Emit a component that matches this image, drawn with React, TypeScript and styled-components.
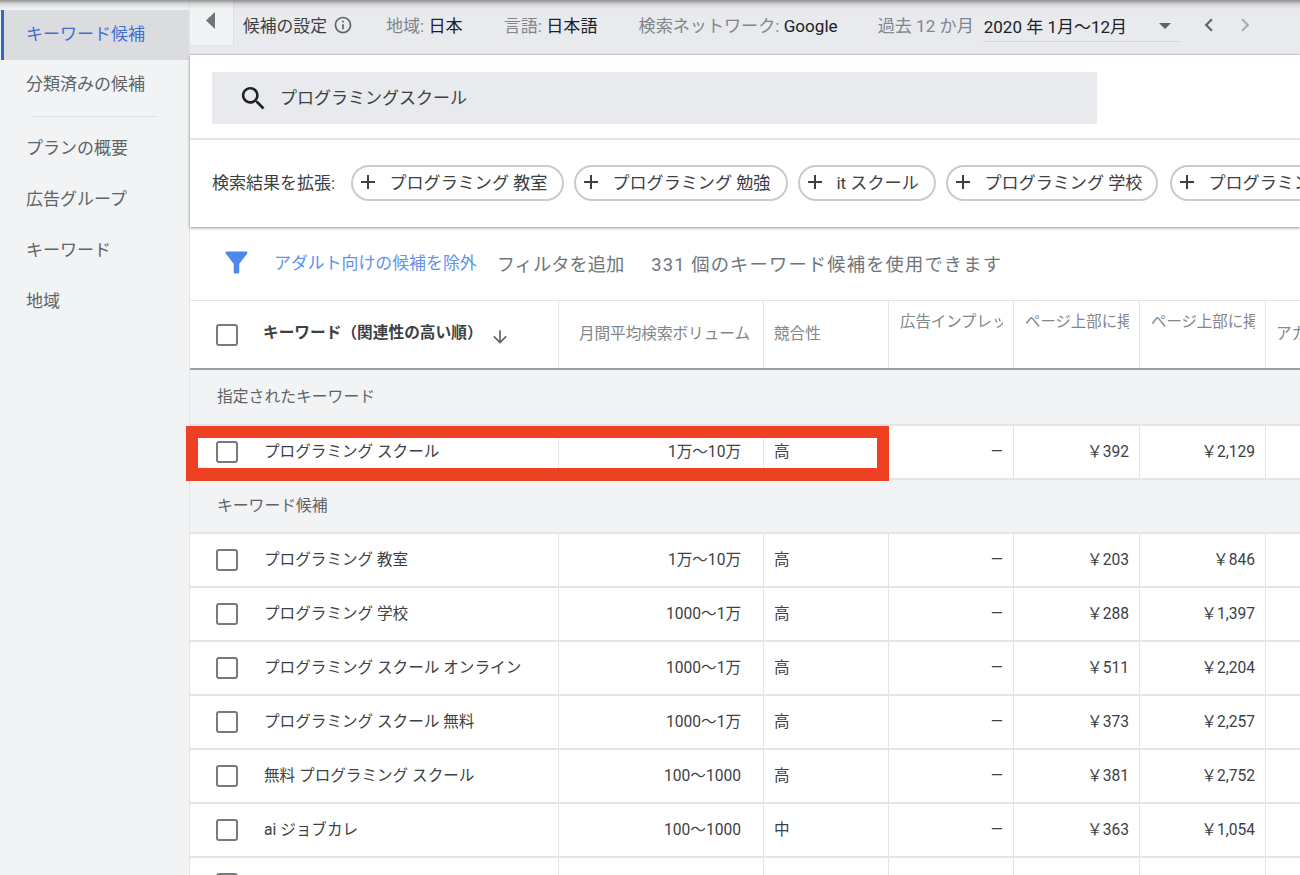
import React from "react";
import styled, { createGlobalStyle } from "styled-components";

const Global = createGlobalStyle`
  html, body { margin: 0; padding: 0; background: #fff; }
  body { font-family: Roboto, "Noto Sans CJK JP", "Noto Sans", sans-serif; color: #3c4043; }
  * { box-sizing: border-box; }
`;

const Page = styled.div`
  position: relative; width: 1300px; height: 875px; overflow: hidden; display: flex;
`;
const TopShade = styled.div`
  position: absolute; left: 0; right: 0; top: 0; height: 9px; z-index: 5; pointer-events: none;
  background: linear-gradient(to bottom, rgba(90,90,90,.62), rgba(120,120,120,.22) 45%, rgba(120,120,120,0));
`;
const Sidebar = styled.nav`
  flex: 0 0 190px; background: #f1f3f4; padding-top: 10px; border-right: 1px solid #e3e5e8;
`;
const NavItem = styled.div<{ $active?: boolean }>`
  height: ${(p) => (p.$active ? 50 : 51)}px; display: flex; align-items: center;
  padding-left: ${(p) => (p.$active ? 22 : 26)}px; font-size: 17px; white-space: nowrap;
  padding-bottom: ${(p) => (p.$active ? 6 : 6)}px;
  color: ${(p) => (p.$active ? "#3f6fd0" : "#5f6368")};
  background: ${(p) => (p.$active ? "#dadce0" : "transparent")};
  margin-left: ${(p) => (p.$active ? 1 : 0)}px;
  border-left: ${(p) => (p.$active ? "3px solid #2f66c8" : "0")};
`;
const NavRule = styled.div`
  width: 126px; height: 1px; background: #dadce0; margin: 5px 0 3px 31px;
`;
const NavGroup = styled.div`
  padding-top: 4px;
  & > div { height: 51px; }
`;
const Main = styled.main`
  flex: 1; min-width: 0; display: flex; flex-direction: column;
`;
const TopBar = styled.header`
  flex: 0 0 55px; display: flex; align-items: center; background: #e8eaed; padding-bottom: 5px;
  border-bottom: 1px solid #d2d4d8; white-space: nowrap; font-size: 17px;
`;
const CollapseTab = styled.div`
  flex: 0 0 44px; height: 46px; align-self: flex-start; background: #f1f3f4;
  border-right: 1px solid #dfe1e5; border-bottom: 1px solid #dfe1e5;
  display: flex; justify-content: center; padding: 12px 3px 0 0;
`;
const BarTitle = styled.span`
  margin-left: 9px; font-size: 16.8px; color: #3c4043;
`;
const InfoWrap = styled.span`
  display: inline-flex; margin-left: 6px; color: #5f6368;
`;
const Setting = styled.span<{ $gap: number }>`
  margin-left: ${(p) => p.$gap}px; color: #80868b; font-size: 17.1px;
  & b { font-weight: 400; color: #202124; }
`;
const RangeSelect = styled.div`
  margin: 2px 0 0 9px; width: 198px; height: 32px; display: flex; align-items: center;
  justify-content: space-between; padding: 1px 10px 0 1px; font-size: 17px; color: #202124;
  border-bottom: 1px solid #d5d7db;
`;
const Caret = styled.span`
  width: 0; height: 0; border-left: 6px solid transparent; border-right: 6px solid transparent;
  border-top: 6px solid #5f6368;
`;
const Pager = styled.span<{ $gap: number; $muted?: boolean }>`
  display: inline-flex; margin-left: ${(p) => p.$gap}px;
  color: ${(p) => (p.$muted ? "#a8acb1" : "#5f6368")};
`;
const SearchPanel = styled.section`
  flex: 0 0 172px; background: #fff; display: flex; flex-direction: column;
  box-shadow: 0 1px 3px rgba(60,64,67,.55); position: relative; z-index: 1;
`;
const SearchArea = styled.div`
  flex: 0 0 85px; padding: 17px 0 0 22px; border-bottom: 2px solid #e3e5e8;
`;
const SearchBox = styled.div`
  width: 885px; height: 52px; background: #e8eaed; display: flex; align-items: center;
  padding-left: 26px; gap: 11px; font-size: 17px; color: #3c4043;
`;
const SearchText = styled.span`
  margin-top: -4px;
`;
const ChipRow = styled.div`
  flex: 1; display: flex; align-items: center; padding: 0 0 2px 22px; white-space: nowrap;
`;
const ChipLabel = styled.span`
  font-size: 17px; color: #3c4043; margin: -2px 16px 0 0;
`;
const Chip = styled.span<{ $w: number; $after: number }>`
  flex: 0 0 ${(p) => p.$w}px; height: 36px; margin-right: ${(p) => p.$after}px; border: 2px solid #c8cbcf;
  border-radius: 18px; display: flex; align-items: center; padding: 0 0 2px 3px; gap: 5px;
  font-size: 17.1px; color: #3c4043; overflow: hidden; background: #fff;
`;
const FilterRow = styled.div`
  flex: 0 0 73px; display: flex; align-items: center; padding: 0 0 1px 30px; white-space: nowrap;
  color: #5f6368;
`;
const FilterIcon = styled.span`
  display: inline-flex; margin-top: -2px;
`;
const FilterLink = styled.span`
  margin: -3px 0 0 21px; font-size: 16.9px; color: #5b93ee;
`;
const FilterAdd = styled.span`
  margin-left: 20px; font-size: 18.3px; color: #70757a;
`;
const FilterCount = styled.span`
  margin-left: 27px; font-size: 18.3px; letter-spacing: 1.15px; color: #70757a;
`;
const COLS = "368px 205px 125px 125px 126px 126px 1fr";
const Table = styled.div`
  position: relative; flex: 1; border-top: 1px solid #e3e5e8;
`;
const HeadRow = styled.div`
  display: grid; grid-template-columns: ${COLS}; height: 69px; border-bottom: 2px solid #9aa0a6;
  background: #fff;
`;
const HeadCell = styled.div<{ $right?: boolean }>`
  border-left: 1.5px solid #e3e5e8; padding: 0 8px 6px 10px;
  display: flex; align-items: center;
  justify-content: ${(p) => (p.$right ? "flex-end" : "flex-start")};
  font-size: 15.6px; color: #80868b; white-space: nowrap; overflow: hidden;
  ${(p) => p.$right && "padding-right: 13px;"}
`;
const KeywordHeadCell = styled.div`
  display: flex; align-items: center; white-space: nowrap; overflow: hidden;
`;
const ClippedHead = styled.div`
  border-left: 1.5px solid #e3e5e8; padding: 11px 10px 0 11px; font-size: 15.4px; color: #80868b;
  white-space: nowrap; overflow: hidden;
`;
const ClipText = styled.div`
  overflow: hidden; line-height: 20px;
`;
const KeywordHead = styled.span`
  font-weight: 700; font-size: 15.7px; color: #3c4043; margin: -6px 0 0 25px;
`;
const SortIcon = styled.span`
  display: inline-flex; color: #5f6368; margin-left: 7px; margin-top: 5px;
`;
const Box = styled.span`
  flex: 0 0 22px; width: 22px; height: 22px; margin-left: 26px; border: 2px solid #777b80;
  border-radius: 3px; background: #fff;
`;
const GroupRow = styled.div<{ $h: number }>`
  height: ${(p) => p.$h}px; background: #f1f3f4; border-bottom: 2px solid #e3e5e8;
  display: flex; align-items: center; padding: 0 0 3px 27px; font-size: 15.8px; color: #5f6368;
`;
const Row = styled.div`
  display: grid; grid-template-columns: ${COLS}; height: 54px; background: #fff;
  border-bottom: 2px solid #e3e5e8;
`;
const Cell = styled.div<{ $align?: string }>`
  display: flex; align-items: center; font-size: 15.6px; color: #3c4043; white-space: nowrap;
  justify-content: ${(p) => p.$align ?? "flex-start"};
  padding: 0 10px 4px 10px;
  border-left: 1.5px solid #e3e5e8;
`;
const KeywordCell = styled.div`
  display: flex; align-items: center; font-size: 15.6px; color: #3c4043; white-space: nowrap;
`;
const KeywordText = styled.span`
  margin: -4px 0 0 26px;
`;
const VolumeCell = styled(Cell)`
  padding-right: 22px;
`;
const DashCell = styled(Cell)`
  padding-bottom: 0;
`;
const Highlight = styled.div`
  position: absolute; left: -4px; top: 125px; width: 703px; height: 55px;
  border: 12px solid #ee4023; border-bottom-width: 13px; z-index: 3;
  pointer-events: none;
`;

const Svg = ({ d, size, fill = "currentColor" }: { d: string; size: number; fill?: string }) => (
  <svg width={size} height={size} viewBox="0 0 24 24" fill={fill} style={{ flex: "none" }}><path d={d} /></svg>
);
const P = {
  search: "M15.5 14h-.79l-.28-.27C15.41 12.59 16 11.11 16 9.5 16 5.91 13.09 3 9.5 3S3 5.91 3 9.5 5.91 16 9.5 16c1.61 0 3.09-.59 4.23-1.57l.27.28v.79l5 4.99L20.49 19l-4.99-5zm-6 0C7.01 14 5 11.99 5 9.5S7.01 5 9.5 5 14 7.01 14 9.5 11.99 14 9.5 14z",
  filter: "M4.25 5.61C6.27 8.2 10 13 10 13v6c0 .55.45 1 1 1h2c.55 0 1-.45 1-1v-6s3.72-4.8 5.74-7.39c.51-.66.04-1.61-.79-1.61H5.04c-.83 0-1.3.95-.79 1.61z",
  info: "M11 7h2v2h-2zm0 4h2v6h-2zm1-9C6.48 2 2 6.48 2 12s4.48 10 10 10 10-4.48 10-10S17.52 2 12 2zm0 18c-4.41 0-8-3.59-8-8s3.59-8 8-8 8 3.59 8 8-3.59 8-8 8z",
  down: "M20 12l-1.41-1.41L13 16.17V4h-2v12.17l-5.58-5.59L4 12l8 8 8-8z",
  left: "M15.41 7.41L14 6l-6 6 6 6 1.41-1.41L10.83 12z",
  right: "M10 6L8.59 7.41 13.17 12l-4.58 4.59L10 18l6-6z",
  plus: "M19 13h-6v6h-2v-6H5v-2h6V5h2v6h6v2z",
};

const chips: [string, number, number][] = [
  ["プログラミング 教室", 213, 10],
  ["プログラミング 勉強", 214, 10],
  ["it スクール", 138, 10],
  ["プログラミング 学校", 212, 12],
  ["プログラミング 独学", 214, 10],
];

type RowData = [string, string, string, string, string];
const rows: RowData[] = [
  ["プログラミング 教室", "1万～10万", "高", "￥203", "￥846"],
  ["プログラミング 学校", "1000～1万", "高", "￥288", "￥1,397"],
  ["プログラミング スクール オンライン", "1000～1万", "高", "￥511", "￥2,204"],
  ["プログラミング スクール 無料", "1000～1万", "高", "￥373", "￥2,257"],
  ["無料 プログラミング スクール", "100～1000", "高", "￥381", "￥2,752"],
  ["ai ジョブカレ", "100～1000", "中", "￥363", "￥1,054"],
  ["", "", "", "", ""],
];

const DataRow = ({ r }: { r: RowData }) => (
  <Row>
    <KeywordCell><Box /><KeywordText>{r[0]}</KeywordText></KeywordCell>
    <VolumeCell $align="flex-end">{r[1]}</VolumeCell>
    <Cell>{r[2]}</Cell>
    <DashCell $align="flex-end">{r[0] ? "—" : ""}</DashCell>
    <Cell $align="flex-end">{r[3]}</Cell>
    <Cell $align="flex-end">{r[4]}</Cell>
    <Cell />
  </Row>
);

export default function App() {
  return (
    <Page>
      <Global />
      <TopShade />
      <Sidebar>
        <NavItem $active>キーワード候補</NavItem>
        <NavItem>分類済みの候補</NavItem>
        <NavRule />
        <NavGroup>
          <NavItem>プランの概要</NavItem>
          <NavItem>広告グループ</NavItem>
          <NavItem>キーワード</NavItem>
          <NavItem>地域</NavItem>
        </NavGroup>
      </Sidebar>
      <Main>
        <TopBar>
          <CollapseTab>
            <svg width="9" height="17" viewBox="0 0 9 17"><polygon points="9,0 9,17 0,8.5" fill="#70757a" /></svg>
          </CollapseTab>
          <BarTitle>候補の設定</BarTitle>
          <InfoWrap><Svg d={P.info} size={20} /></InfoWrap>
          <Setting $gap={33}>地域: <b>日本</b></Setting>
          <Setting $gap={41}>言語: <b>日本語</b></Setting>
          <Setting $gap={41}>検索ネットワーク: <b>Google</b></Setting>
          <Setting $gap={40}>過去 12 か月</Setting>
          <RangeSelect>2020 年 1月～12月<Caret /></RangeSelect>
          <Pager $gap={15}><Svg d={P.left} size={26} /></Pager>
          <Pager $gap={10} $muted><Svg d={P.right} size={26} /></Pager>
        </TopBar>
        <SearchPanel>
          <SearchArea>
            <SearchBox>
              <Svg d={P.search} size={31} fill="#202124" />
              <SearchText>プログラミングスクール</SearchText>
            </SearchBox>
          </SearchArea>
          <ChipRow>
            <ChipLabel>検索結果を拡張:</ChipLabel>
            {chips.map(([t, w, after]) => (
              <Chip key={t} $w={w} $after={after}><Svg d={P.plus} size={24} fill="#3c4043" />&nbsp;{t}</Chip>
            ))}
          </ChipRow>
        </SearchPanel>
        <FilterRow>
          <FilterIcon><Svg d={P.filter} size={33} fill="#4f87ec" /></FilterIcon>
          <FilterLink>アダルト向けの候補を除外</FilterLink>
          <FilterAdd>フィルタを追加</FilterAdd>
          <FilterCount>331 個のキーワード候補を使用できます</FilterCount>
        </FilterRow>
        <Table>
          <HeadRow>
            <KeywordHeadCell>
              <Box />
              <KeywordHead>キーワード（関連性の高い順）</KeywordHead>
              <SortIcon><Svg d={P.down} size={20} /></SortIcon>
            </KeywordHeadCell>
            <HeadCell $right>月間平均検索ボリューム</HeadCell>
            <HeadCell>競合性</HeadCell>
            <ClippedHead><ClipText>広告インプレッション シェア</ClipText></ClippedHead>
            <ClippedHead><ClipText>ページ上部に掲載された広告の入札単価</ClipText></ClippedHead>
            <ClippedHead><ClipText>ページ上部に掲載された広告の入札単価</ClipText></ClippedHead>
            <HeadCell>アカウントのステータス</HeadCell>
          </HeadRow>
          <GroupRow $h={56}>指定されたキーワード</GroupRow>
          <Row>
            <KeywordCell><Box /><KeywordText>プログラミング スクール</KeywordText></KeywordCell>
            <VolumeCell $align="flex-end">1万～10万</VolumeCell>
            <Cell>高</Cell>
            <DashCell $align="flex-end">—</DashCell>
            <Cell $align="flex-end">￥392</Cell>
            <Cell $align="flex-end">￥2,129</Cell>
            <Cell />
          </Row>
          <GroupRow $h={54}>キーワード候補</GroupRow>
          {rows.map((r, i) => <DataRow key={i} r={r} />)}
          <Highlight />
        </Table>
      </Main>
    </Page>
  );
}
